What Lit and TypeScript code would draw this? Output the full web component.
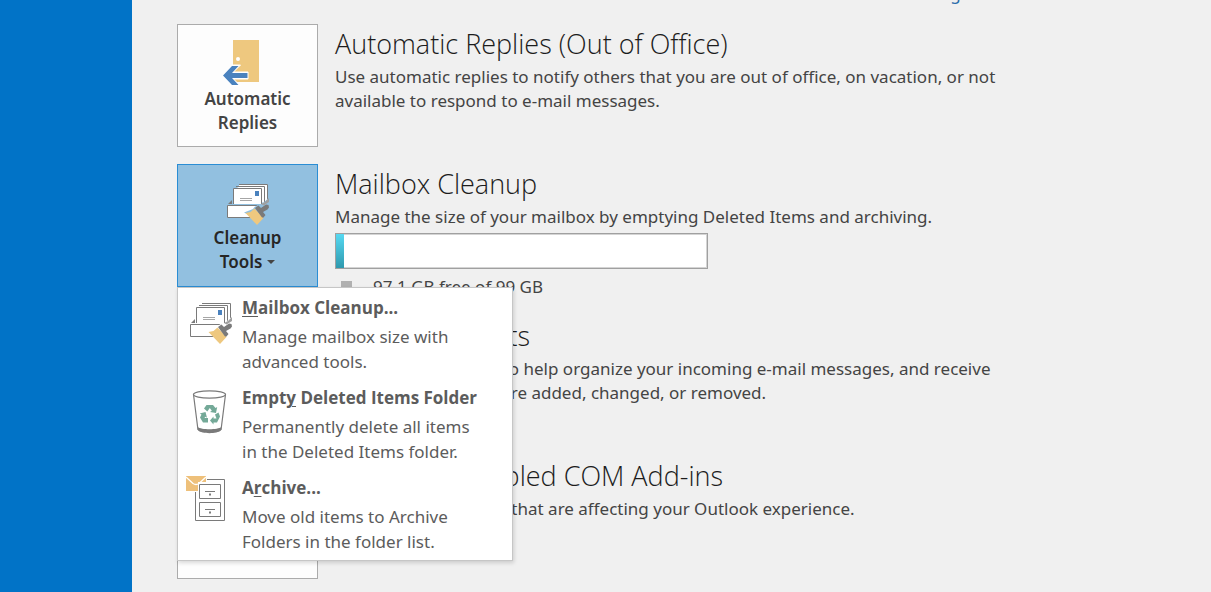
import { LitElement, html, svg, css, nothing } from "lit";
import { customElement, property } from "lit/decorators.js";

const automaticRepliesIcon = html`<svg class="icon" width="50" height="48" viewBox="0 0 50 48" aria-hidden="true">
  <path d="M10 1h26v42H10z" fill="#eec87f" />
  <circle cx="15" cy="20" r="2" fill="#fff" />
  <path d="M0 36.500 9.500 26h8L10.500 33H25v7H10.500l7 7h-8z" fill="#fff" stroke="#fff" stroke-width="1" />
  <path d="M0 36.500 9 27h6.500L9 34h15.500v5H9l6.500 7H9z" fill="#4a82be" />
</svg>`;

const mailStack = (halo: string) => svg`
  <g fill="#fff" stroke="#7a7a7a">
    <path d="M13 1.500h28.500v18H13z" stroke="none" />
    <path d="M13 1.500h28.500V20" />
    <path d="M10 3.500h28.500V20" />
    <path d="M7.500 21V5.500h28V21" />
    <path d="M1.500 22.500h31v12h-31z" />
  </g>
  <path d="M29 8h4v5h-4z" fill="#4a82be" />
  <path d="M14 15.500h12M14 17.500h12" stroke="#a6a6a6" />
  <path d="M2 21l4-4v4z" fill="#7a7a7a" />
  <path d="M18 29.500l9-3.500 1.500-2 4-2.500 2.500.5 8-7.500 1 7.500-3 5-1 5-2 3.500-5 0-4-0.500z" fill="${halo}" />
  <path d="M19.500 30l5-1 4-3.500 9 9.500L31 42z" fill="#eec87f" />
  <path d="M29 25l3.500-2.500 2.500 2.500 5-3.500 2.500.5.5 2.500-1.500 2-4.500 2.500 2.500 3-2 2.500-1.500 0z" fill="#7a7a7a" />
  <path d="M35 21l4-2 4-4v4l-5.500 3.500z" fill="#a0a0a0" />`;

const cleanupIcon = (halo: string) => html`<svg class="icon" width="44" height="44" viewBox="0 0 44 44" aria-hidden="true">${mailStack(halo)}</svg>`;

const trashIcon = html`<svg class="icon" width="38" height="46" viewBox="0 0 38 46" aria-hidden="true">
  <path d="M6.500 39c4 3 20 3 24 0l-.5 3.500c-4 3.500-19 3.500-23 0z" fill="#7a7a7a" />
  <path d="M2.500 6.500 7 42M30 42l4.500-35.500" fill="none" stroke="#7a7a7a" stroke-width="1.200" />
  <ellipse cx="18.500" cy="6.500" rx="16" ry="3.700" fill="#fff" stroke="#7a7a7a" stroke-width="1.300" />
  <g fill="#74a998">
    <path d="M13 20.500l2.500-3.500h6.500l2.500 3 1.700-1-1.200 6-6-1 1.800-1.200-2-2.800-2.500 3.500z" />
    <path d="M24 26.500l3.500-2 1.500 4-3 6h-3.500v2l-3.500-4 3.500-4v2h3z" />
    <path d="M17 30v4.500h-5l-3-5 1.500-3-1.800-1 5.800-1.500 1.500 5.800-1.700-1-.8 1.200z" />
  </g>
</svg>`;

const archiveIcon = html`<svg class="icon" width="42" height="48" viewBox="0 0 42 48" aria-hidden="true">
  <g fill="#fff" stroke="#7a7a7a">
    <path d="M10.500 4.500h29v41h-29z" />
    <path d="M14.500 9.500h21v14h-21zM14.500 27.500h21v14h-21z" />
    <path d="M20 16.500h10M20 34.500h10" />
  </g>
  <path d="M24 18.500h2v2h-2zM24 36.500h2v2h-2z" fill="#7a7a7a" />
  <path d="M0 0h22v8h-8v9H0z" fill="#fff" />
  <path d="M1 1h20v6h-8v9H1z" fill="#eec07a" />
  <path d="M1 2l7 6.500q3 2 6 0L21 2" fill="none" stroke="#fff" stroke-width="1.300" />
</svg>`;

@customElement("command-tile")
class CommandTile extends LitElement {
  @property({ type: Array }) lines: string[] = [];
  @property({ attribute: false }) icon: unknown = nothing;
  @property({ type: Boolean }) open = false;
  @property({ type: Boolean }) drop = false;

  static styles = css`
    :host { display: block; }
    button {
      display: flex;
      flex-direction: column;
      align-items: center;
      box-sizing: border-box;
      width: 141px;
      height: 123px;
      padding: 14px 0 0;
      border: 1px solid #ababab;
      background: #fdfdfd;
      color: #444;
      font: 600 17px/24px "Noto Sans", "Open Sans", sans-serif;
    }
    button.open { background: #92c0e0; border-color: #2a8dd4; color: #262626; padding-top: 18px; }
    .icon { display: block; flex: none; }
    .open .icon { margin-bottom: -1px; }
    .caret {
      display: inline-block;
      margin-left: 5px;
      vertical-align: 4px;
      border: 4px solid transparent;
      border-top-color: #444;
      border-bottom: 0;
    }
  `;

  render() {
    return html`<button class=${this.open ? "open" : ""} type="button" aria-expanded=${this.drop ? String(this.open) : nothing}>
      ${this.icon}
      ${this.lines.map((line, i) => html`<span>${line}${this.drop && i === this.lines.length - 1 ? html`<i class="caret"></i>` : nothing}</span>`)}
    </button>`;
  }
}

interface MenuEntry {
  before: string;
  key: string;
  after: string;
  detail: string[];
  icon: unknown;
  iconClass: string;
}

const entries: MenuEntry[] = [
  { before: "", key: "M", after: "ailbox Cleanup...", detail: ["Manage mailbox size with", "advanced tools."], icon: cleanupIcon("#fff"), iconClass: "mail" },
  { before: "Empt", key: "y", after: " Deleted Items Folder", detail: ["Permanently delete all items", "in the Deleted Items folder."], icon: trashIcon, iconClass: "trash" },
  { before: "A", key: "r", after: "chive...", detail: ["Move old items to Archive", "Folders in the folder list."], icon: archiveIcon, iconClass: "archive" },
];

@customElement("cleanup-menu")
class CleanupMenu extends LitElement {
  static styles = css`
    :host {
      display: block;
      box-sizing: border-box;
      width: 336px;
      border: 1px solid #c6c6c6;
      background: #fff;
      box-shadow: 1px 2px 4px rgba(0, 0, 0, 0.15);
      padding-bottom: 2px;
    }
    button {
      display: grid;
      grid-template-columns: 64px 1fr;
      align-content: start;
      width: 100%;
      height: 90px;
      padding: 4px 0 0;
      border: 0;
      background: none;
      color: #5c5c5c;
      text-align: left;
      font: 17px/25px "Noto Sans", "Open Sans", sans-serif;
    }
    .title { display: block; font: 700 17px/32px "Open Sans", "Noto Sans", sans-serif; }
    .line { display: block; white-space: nowrap; }
    u { text-underline-offset: 2px; text-decoration-thickness: 1px; }
    .glyph { padding: 10px 0 0 11px; }
    .glyph.trash { padding: 6px 0 0 13px; }
    .glyph.archive { padding: 3px 0 0 7px; }
    .icon { display: block; }
  `;

  render() {
    return html`${entries.map(
      (e) => html`<button type="button" role="menuitem">
        <span class="glyph ${e.iconClass}">${e.icon}</span>
        <span class="text">
          <span class="title">${e.before}<u>${e.key}</u>${e.after}</span>
          ${e.detail.map((d) => html`<span class="line">${d}</span>`)}
        </span>
      </button>`
    )}`;
  }
}

@customElement("app-root")
class AppRoot extends LitElement {
  static styles = css`
    :host {
      display: grid;
      grid-template-columns: 132px 1fr;
      height: 100vh;
      overflow: hidden;
      background: #f0f0f0;
      color: #444;
      font: 17px/24px "Noto Sans", "Open Sans", sans-serif;
    }
    nav { background: #0173c7; }
    main { padding: 0 45px; min-width: 0; }
    header { display: flex; align-items: flex-start; height: 24px; padding-left: 732px; }
    header a { margin-top: -18px; color: #2b6cab; text-decoration: none; }
    section { display: grid; grid-template-columns: 141px minmax(0, 1fr); column-gap: 17px; min-height: 123px; margin-bottom: 17px; }
    .anchor { position: relative; }
    cleanup-menu { position: absolute; left: 0; top: 123px; z-index: 2; }
    h2 { margin: 1px 0 0; font: 300 27px/38px "Open Sans", "Noto Sans", sans-serif; color: #1c1c1c; white-space: nowrap; }
    p { margin: 2px 0 0; white-space: nowrap; }
    p span { display: block; }
    .quota { box-sizing: border-box; width: 373px; height: 36px; margin-top: 4px; border: 1px solid #a0a0a0; background: #fff; box-shadow: inset 0 0 0 1px #d4d4d4; }
    .used { height: 100%; background: linear-gradient(#56d9f2, #2f99ae); }
    .legend { display: flex; align-items: center; gap: 21px; padding: 5px 0 0 6px; height: 25px; }
    .swatch { width: 11px; height: 11px; background: #b1b1b1; }
  `;

  render() {
    return html`
      <nav aria-label="File"></nav>
      <main>
        <header><a href="#photo">Change</a></header>
        <section>
          <command-tile .lines=${["Automatic", "Replies"]} .icon=${automaticRepliesIcon}></command-tile>
          <div>
            <h2>Automatic Replies (Out of Office)</h2>
            <p>
              <span>Use automatic replies to notify others that you are out of office, on vacation, or not</span>
              <span>available to respond to e-mail messages.</span>
            </p>
          </div>
        </section>
        <section>
          <div class="anchor">
            <command-tile .lines=${["Cleanup", "Tools"]} .icon=${cleanupIcon("#92c0e0")} open drop></command-tile>
            <cleanup-menu role="menu"></cleanup-menu>
          </div>
          <div>
            <h2>Mailbox Cleanup</h2>
            <p>Manage the size of your mailbox by emptying Deleted Items and archiving.</p>
            <div class="quota" role="meter" aria-label="Mailbox space used" aria-valuemin="0" aria-valuemax="99" aria-valuenow="1.9">
              <div class="used" style="width:${(1.9 / 99) * 115}%"></div>
            </div>
            <div class="legend"><i class="swatch"></i><span>97.1 GB free of 99 GB</span></div>
          </div>
        </section>
        <section>
          <command-tile></command-tile>
          <div>
            <h2>Rules and Alerts</h2>
            <p>
              <span>Use Rules and Alerts to help organize your incoming e-mail messages, and receive</span>
              <span>updates when items are added, changed, or removed.</span>
            </p>
          </div>
        </section>
        <section>
          <command-tile></command-tile>
          <div>
            <h2>Slow and Disabled COM Add-ins</h2>
            <p>Manage COM add-ins that are affecting your Outlook experience.</p>
          </div>
        </section>
      </main>
    `;
  }
}
